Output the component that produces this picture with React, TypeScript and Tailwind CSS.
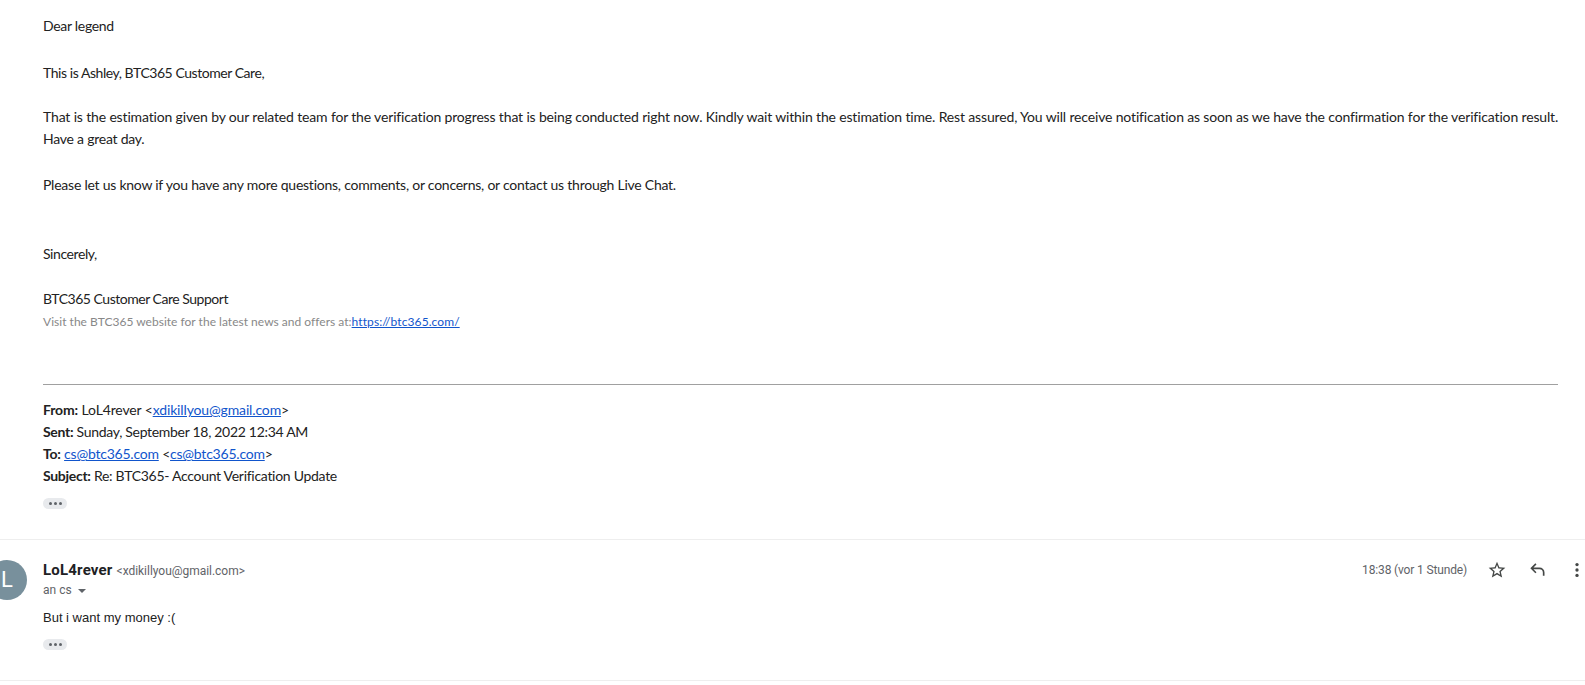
import React from "react";

const Dots = () => (
	<div className="flex h-[11px] w-6 items-center justify-center gap-[2px] rounded-full bg-[#e8eaed]">
		<span className="h-[3px] w-[3px] rounded-full bg-[#5f6368]" />
		<span className="h-[3px] w-[3px] rounded-full bg-[#5f6368]" />
		<span className="h-[3px] w-[3px] rounded-full bg-[#5f6368]" />
	</div>
);

const Mail = ({ children }: { children: React.ReactNode }) => (
	<a className="text-[#1155cc] underline">{children}</a>
);

export default function App() {
	return (
		<div className="h-[685px] w-[1585px] overflow-hidden bg-white font-['Lato',sans-serif] text-[14px] leading-[22px] text-[#222222]">
			{/* Quoted reply */}
			<div className="h-[540px] border-b border-[#eeeeee] pl-[43px] pr-[27px] pt-[15px]">
				<p className="tracking-[-0.3px]">Dear legend</p>
				<p className="mt-[25px] tracking-[-0.45px]">This is Ashley, BTC365 Customer Care,</p>
				<p className="mt-[22px] whitespace-nowrap tracking-[-0.155px]">
					That is the estimation given by our related team for the verification progress that is being conducted right now. Kindly wait within the estimation time. Rest assured, You will receive notification as soon as we have the confirmation for the verification result.
				</p>
				<p className="tracking-[-0.24px]">Have a great day.</p>
				<p className="mt-6 tracking-[-0.24px]">Please let us know if you have any more questions, comments, or concerns, or contact us through Live Chat.</p>
				<p className="mt-[47px] tracking-[-0.42px]">Sincerely,</p>
				<p className="mt-[23px] tracking-[-0.48px]">BTC365 Customer Care Support</p>
				<p className="mt-px text-[12px] tracking-[0.02px] text-[#888888]">
					Visit the BTC365 website for the latest news and offers at:
					<span className="tracking-[0.09px]">
						<Mail>https://btc365.com/</Mail>
					</span>
				</p>
				<hr className="mt-[51px] border-t border-[#a0a0a0]" />
				<div className="mt-[14px]">
					<p className="tracking-[-0.14px]">
						<b>From:</b> LoL4rever &lt;<Mail>xdikillyou@gmail.com</Mail>&gt;
					</p>
					<p className="tracking-[-0.3px]">
						<b>Sent:</b> Sunday, September 18, 2022 12:34 AM
					</p>
					<p className="tracking-[-0.22px]">
						<b>To:</b> <Mail>cs@btc365.com</Mail> &lt;<Mail>cs@btc365.com</Mail>&gt;
					</p>
					<p className="tracking-[-0.29px]">
						<b>Subject:</b> Re: BTC365- Account Verification Update
					</p>
				</div>
				<div className="mt-[11px]">
					<Dots />
				</div>
			</div>

			{/* Last message */}
			<div className="flex h-[141px] border-b border-[#eeeeee] pt-5">
				<div className="-ml-[13px] mr-4 flex h-10 w-10 shrink-0 items-center justify-center rounded-full bg-[#78909c] font-['Roboto',sans-serif] text-[22px] text-white">
					L
				</div>
				<div className="min-w-0 flex-1 font-['Roboto',sans-serif]">
					<div className="flex h-5 items-center justify-between">
						<div className="flex items-baseline gap-1">
							<span className="text-[15px] font-bold tracking-[0.2px] text-[#202124]">LoL4rever</span>
							<span className="text-[12px] tracking-[-0.03px] text-[#5f6368]">&lt;xdikillyou@gmail.com&gt;</span>
						</div>
						<div className="-mr-[2px] flex items-center text-[12px] text-[#5f6368]">
							<span className="tracking-[-0.15px]">18:38 (vor 1 Stunde)</span>
							<svg className="ml-5" width="20" height="20" viewBox="0 0 24 24" fill="#444746">
								<path d="M22 9.24l-7.19-.62L12 2 9.19 8.63 2 9.24l5.46 4.73L5.82 21 12 17.27 18.18 21l-1.63-7.03L22 9.24zM12 15.4l-3.76 2.27 1-4.28-3.32-2.88 4.38-.38L12 6.1l1.71 4.04 4.38.38-3.32 2.88 1 4.28L12 15.4z" />
							</svg>
							<svg className="ml-5" width="20" height="20" viewBox="0 0 24 24" fill="#444746">
								<path d="M21 19h-2v-4a4 4 0 0 0-4-4H7.8l3.6 3.6L10 16l-6-6 6-6 1.4 1.4L7.8 9H15a6 6 0 0 1 6 6v4z" />
							</svg>
							<svg className="ml-5" width="20" height="20" viewBox="0 0 24 24" fill="#444746">
								<circle cx="12" cy="5.5" r="2" />
								<circle cx="12" cy="12" r="2" />
								<circle cx="12" cy="18.5" r="2" />
							</svg>
						</div>
					</div>
					<div className="flex h-5 items-center text-[12px] text-[#5f6368]">
						an cs
						<span className="ml-[6px] mt-[2px] h-0 w-0 border-x-[4px] border-t-[4px] border-x-transparent border-t-[#5f6368]" />
					</div>
					<p className="mt-2 font-['Liberation_Sans',sans-serif] text-[13px] leading-5 text-[#222222]">But i want my money :(</p>
					<div className="mt-[11px]">
						<Dots />
					</div>
				</div>
			</div>
		</div>
	);
}
